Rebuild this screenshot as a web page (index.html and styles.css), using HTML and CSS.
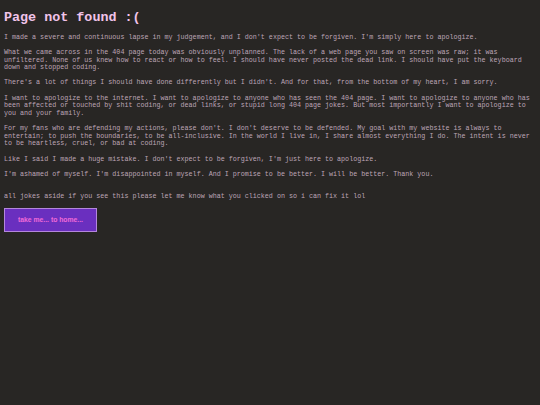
FILE: index.html
```html
<!DOCTYPE html>
<html lang="en">
<head>
<meta charset="utf-8">
<title>Page not found</title>
<link rel="stylesheet" href="styles.css">
</head>
<body>
<main class="page">
  <h1 class="title">Page not found :(</h1>
  <p class="para">I made a severe and continuous lapse in my judgement, and I don't expect to be forgiven. I'm simply here to apologize.</p>
  <p class="para">What we came across in the 404 page today was obviously unplanned. The lack of a web page you saw on screen was raw; it was unfiltered. None of us knew how to react or how to feel. I should have never posted the dead link. I should have put the keyboard down and stopped coding.</p>
  <p class="para">There's a lot of things I should have done differently but I didn't. And for that, from the bottom of my heart, I am sorry.</p>
  <p class="para">I want to apologize to the internet. I want to apologize to anyone who has seen the 404 page. I want to apologize to anyone who has been affected or touched by shit coding, or dead links, or stupid long 404 page jokes. But most importantly I want to apologize to you and your family.</p>
  <p class="para">For my fans who are defending my actions, please don't. I don't deserve to be defended. My goal with my website is always to entertain; to push the boundaries, to be all-inclusive. In the world I live in, I share almost everything I do. The intent is never to be heartless, cruel, or bad at coding.</p>
  <p class="para">Like I said I made a huge mistake. I don't expect to be forgiven, I'm just here to apologize.</p>
  <p class="para">I'm ashamed of myself. I'm disappointed in myself. And I promise to be better. I will be better. Thank you.</p>
  <p class="para note">all jokes aside if you see this please let me know what you clicked on so i can fix it lol</p>
  <a class="home-btn" href="#">take me... to home...</a>
</main>
</body>
</html>
```
FILE: styles.css
```css
html, body {
  margin: 0;
  padding: 0;
  background: #282624;
}
body {
  font-family: "Liberation Mono", "Courier New", monospace;
  color: #bda5b6;
}
.page {
  padding: 6px 4px 4px;
}
.title {
  margin: 4px 0 8.5px;
  font-size: 13.4px;
  line-height: 15.2px;
  font-weight: bold;
  color: #f1c3e9;
}
.para {
  margin: 0 0 7.7px;
  font-size: 6.7px;
  line-height: 7.6px;
}
.note {
  margin-top: 14.6px;
  margin-bottom: 7px;
}
.home-btn {
  display: flex;
  align-items: center;
  justify-content: center;
  box-sizing: border-box;
  width: 93px;
  height: 24px;
  background: #6a2fbf;
  border: 1px solid #b486dc;
  color: #f06ad8;
  font-family: "Liberation Sans", Arial, sans-serif;
  font-weight: bold;
  font-size: 6.8px;
  text-decoration: none;
}
```
